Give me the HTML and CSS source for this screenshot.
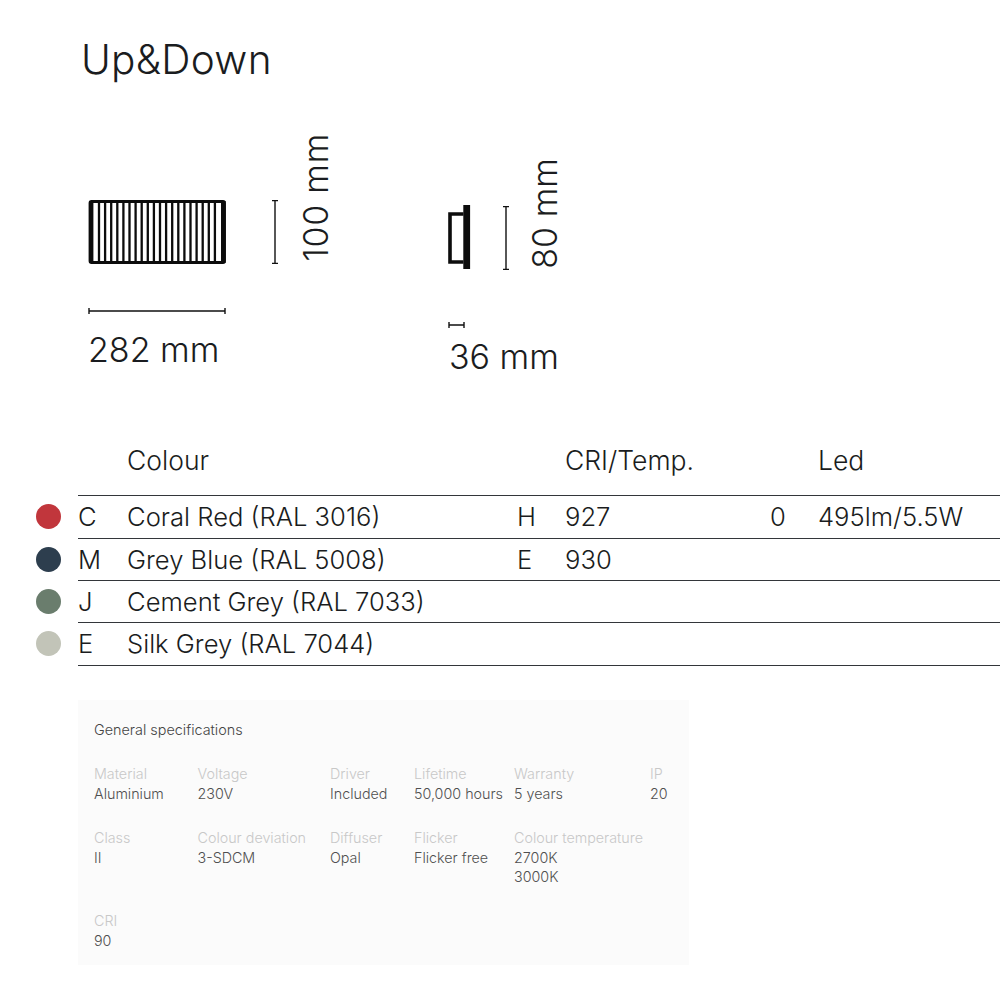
FILE: index.html
```html
<!DOCTYPE html>
<html lang="en">
<head>
<meta charset="utf-8">
<title>Up&amp;Down</title>
<link rel="stylesheet" href="styles.css">
</head>
<body>
<main class="page">
  <h1 class="title">Up&amp;Down</h1>
  <section class="figures">
    <div class="figure figure-front">
      <div class="view">
        <svg class="drawing-front" width="138" height="64" viewBox="0 0 138 64">
          <rect x="2" y="1.5" width="134.5" height="61" rx="1.5" fill="none" stroke="#0c0c0c" stroke-width="2.8"/>
          <rect x="1" y="1" width="4.4" height="62" fill="#0c0c0c"/>
          <rect x="133" y="1" width="4.6" height="62" fill="#0c0c0c"/>
          <path class="ribs" d="M11 1V63M17.1 1V63M23.2 1V63M29.3 1V63M35.4 1V63M41.5 1V63M47.6 1V63M53.7 1V63M59.8 1V63M65.9 1V63M72 1V63M78.1 1V63M84.2 1V63M90.3 1V63M96.4 1V63M102.5 1V63M108.6 1V63M114.7 1V63M120.8 1V63M126.9 1V63"/>
        </svg>
        <svg class="dim-v dim-v-front" width="8" height="64" viewBox="0 0 8 64">
          <path class="dim" d="M1 .5H7M4 .5V63.5M1 63.5H7"/>
        </svg>
        <span class="size size-v size-wide">100 mm</span>
      </div>
      <svg class="dim-h" width="138" height="8" viewBox="0 0 138 8">
        <path class="dim" d="M1 1V7M1 4H137M137 1V7"/>
      </svg>
      <span class="size size-h">282 mm</span>
    </div>
    <div class="figure figure-side">
      <div class="view">
        <svg class="drawing-side" width="23" height="64" viewBox="0 0 23 64">
          <path d="M15.5 9H2V57H15.5" fill="none" stroke="#0c0c0c" stroke-width="3.6"/>
          <rect x="15.3" y="0" width="6.8" height="64" fill="#0c0c0c"/>
        </svg>
        <svg class="dim-v dim-v-side" width="8" height="64" viewBox="0 0 8 64">
          <path class="dim" d="M1 .5H7M4 .5V63.5M1 63.5H7"/>
        </svg>
        <span class="size size-v">80 mm</span>
      </div>
      <svg class="dim-h" width="18" height="8" viewBox="0 0 18 8">
        <path class="dim" d="M1 1V7M1 4H16M16 1V7"/>
      </svg>
      <span class="size size-h">36 mm</span>
    </div>
  </section>

  <section class="table">
    <div class="thead">
      <span class="c-name">Colour</span>
      <span class="c-temp">CRI/Temp.</span>
      <span class="c-led">Led</span>
    </div>
    <div class="row row-first">
      <span class="dot dot-red"></span>
      <div class="cells">
        <span class="c-letter">C</span><span class="c-name">Coral Red (RAL 3016)</span>
        <span class="c-code">H</span><span class="c-temp">927</span>
        <span class="c-opt">0</span><span class="c-led">495lm/5.5W</span>
      </div>
    </div>
    <div class="row">
      <span class="dot dot-blue"></span>
      <div class="cells">
        <span class="c-letter">M</span><span class="c-name">Grey Blue (RAL 5008)</span>
        <span class="c-code">E</span><span class="c-temp">930</span>
      </div>
    </div>
    <div class="row">
      <span class="dot dot-green"></span>
      <div class="cells">
        <span class="c-letter">J</span><span class="c-name">Cement Grey (RAL 7033)</span>
      </div>
    </div>
    <div class="row row-last">
      <span class="dot dot-silk"></span>
      <div class="cells">
        <span class="c-letter">E</span><span class="c-name">Silk Grey (RAL 7044)</span>
      </div>
    </div>
  </section>

  <section class="specs">
    <h2 class="specs-title">General specifications</h2>
    <dl class="spec-grid">
      <div><dt>Material</dt><dd>Aluminium</dd></div>
      <div><dt>Voltage</dt><dd>230V</dd></div>
      <div><dt>Driver</dt><dd>Included</dd></div>
      <div><dt>Lifetime</dt><dd>50,000 hours</dd></div>
      <div><dt>Warranty</dt><dd>5 years</dd></div>
      <div><dt>IP</dt><dd>20</dd></div>
      <div><dt>Class</dt><dd>II</dd></div>
      <div><dt>Colour deviation</dt><dd>3-SDCM</dd></div>
      <div><dt>Diffuser</dt><dd>Opal</dd></div>
      <div><dt>Flicker</dt><dd>Flicker free</dd></div>
      <div><dt>Colour temperature</dt><dd>2700K<br>3000K</dd></div>
      <div></div>
      <div><dt>CRI</dt><dd>90</dd></div>
    </dl>
  </section>
</main>
</body>
</html>
```
FILE: styles.css
```css
* { box-sizing: border-box; margin: 0; padding: 0; }
html, body { background: #fff; }
body { font-family: Inter, "Liberation Sans", sans-serif; color: #1a1c20; }
.page { width: 1000px; height: 1000px; overflow: hidden; }

.title { font-size: 40.5px; font-weight: 300; line-height: 48px; padding: 36px 0 0 81px; height: 84px; letter-spacing: .3px; }

.figures { display: flex; height: 322px; padding: 50px 0 0 88px; align-items: flex-start; }
.figure { display: flex; flex-direction: column; align-items: flex-start; }
.figure-front { width: 360px; }
.figure-side { padding-top: 26px; }
.view { display: flex; align-items: flex-end; height: 130px; }
.figure-side .view { height: 110px; }
.drawing-front, .drawing-side, .dim-v, .dim-h { display: block; flex: none; }
.drawing-side { margin-bottom: 1px; }
.ribs { stroke: #0c0c0c; stroke-width: 2.3; fill: none; }
.dim { stroke: #111; stroke-width: 1.4; fill: none; }
.dim-v-front { margin-left: 45px; }
.dim-v-side { margin-left: 31px; }
.size { font-size: 34px; font-weight: 350; line-height: 38px; white-space: nowrap; }
.size-wide { letter-spacing: .7px; }
.size-v { writing-mode: vertical-rl; transform: rotate(180deg); line-height: 38px; margin-left: 18px; margin-bottom: 3px; }
.figure-side .size-v { margin-left: 16px; margin-bottom: 1px; }
.dim-h { margin-top: 43px; }
.figure-side .dim-h { margin-top: 51px; }
.size-h { margin-top: 16px; }
.figure-side .size-h { margin: 9px 0 0 1px; }

.table { font-size: 25.6px; font-weight: 350; line-height: 42px; }
.thead { display: flex; height: 89px; padding: 32.5px 0 0 127px; font-size: 26.5px; }
.thead .c-name { width: 438px; }
.thead .c-temp { width: 253px; }
.row { display: flex; align-items: center; height: 42px; padding-left: 36px; }
.row-first { height: 43px; }
.row-last { height: 43.5px; }
.dot { width: 25px; height: 25px; border-radius: 50%; margin-right: 17px; flex: none; }
.dot-red { background: #c1363c; }
.dot-blue { background: #2d3e4e; }
.dot-green { background: #6a7d6d; }
.dot-silk { background: #c2c4b8; }
.cells { display: flex; flex: 1; height: 100%; border-top: 1.5px solid #33363a; align-items: center; }
.row-last .cells { border-bottom: 1.5px solid #33363a; }
.c-letter { width: 49px; }
.cells .c-name { width: 390px; }
.c-code { width: 48px; }
.cells .c-temp { width: 205px; }
.c-opt { width: 48px; }

.specs { margin: 34.5px 0 0 78px; width: 611px; height: 265px; background: #fbfbfb; padding: 20px 16px; }
.specs-title { font-size: 14.4px; font-weight: 300; line-height: 20px; color: #444; margin-bottom: 24px; }
.spec-grid { display: grid; grid-template-columns: 103.5px 132.5px 84px 100px 136px 1fr; row-gap: 24.5px; font-size: 14.3px; font-weight: 300; line-height: 19.4px; }
.spec-grid dt { color: #c8c8c8; white-space: nowrap; margin-bottom: .6px; }
.spec-grid dd { color: #4f4f4f; white-space: nowrap; }
```
